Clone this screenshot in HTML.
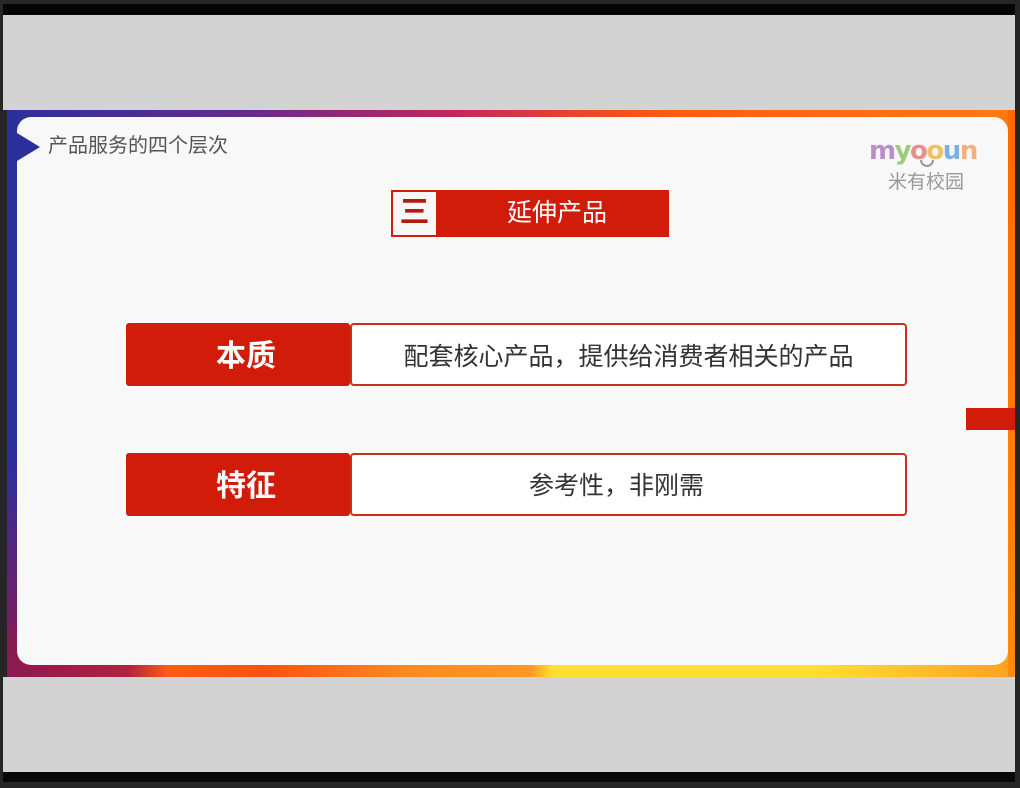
<!DOCTYPE html>
<html><head><meta charset="utf-8"><style>
*{margin:0;padding:0;box-sizing:border-box}
body{width:1020px;height:788px;background:#262626;position:relative;overflow:hidden;font-family:"Liberation Sans","Noto Sans CJK SC",sans-serif}
.abs{position:absolute}
.red{background:#d21c0a}
</style></head><body>
<div class="abs" style="left:3px;top:4px;width:1012px;height:11px;background:#050505"></div>
<div class="abs" style="left:3px;top:15px;width:1012px;height:95px;background:#d3d3d3"></div>
<div class="abs" style="left:3px;top:677px;width:1012px;height:95px;background:#d3d3d3"></div>
<div class="abs" style="left:3px;top:772px;width:1012px;height:10px;background:#080808"></div>
<!-- frame -->
<div class="abs" style="left:7px;top:110px;width:1008px;height:567px;background:linear-gradient(90deg,#2b2f9c 0%,#6a2a8a 25%,#c8265a 45%,#ff5a10 65%,#ff7a10 100%)"></div>
<div class="abs" style="left:7px;top:390px;width:1008px;height:287px;background:linear-gradient(90deg,#8a1a4e 0%,#b52040 12%,#ff5a15 16%,#ff5212 26%,#ff8a1a 40%,#ff9a20 52%,#ffdf30 54%,#ffe030 80%,#ffa020 100%)"></div>
<div class="abs" style="left:7px;top:110px;width:10px;height:540px;background:linear-gradient(180deg,#2b2f9c 0%,#2b2f9c 65%,#6a2070 90%,#8a1a4e 100%)"></div>
<div class="abs" style="left:1008px;top:110px;width:7px;height:567px;background:linear-gradient(180deg,#ff6a00,#ff8a10)"></div>
<!-- card -->
<div class="abs" style="left:17px;top:117px;width:991px;height:548px;background:#f8f8f8;border-radius:14px"></div>
<!-- arrow -->
<div class="abs" style="left:17px;top:133px;width:0;height:0;border-top:14px solid transparent;border-bottom:14px solid transparent;border-left:23px solid #2b2f9c"></div>
<div class="abs" style="left:48px;top:134px;font-size:20px;color:#555;line-height:24px">产品服务的四个层次</div>
<!-- logo -->
<div class="abs" style="left:869px;top:136px;font-size:26px;font-weight:bold;line-height:30px;letter-spacing:-1.5px;font-family:'DejaVu Sans',sans-serif"><span style="color:#b98fc9">m</span><span style="color:#9ccb7a">y</span><span style="color:#e8908a">o</span><span style="color:#f2c060">o</span><span style="color:#7fb0e0">u</span><span style="color:#f4b07a">n</span></div>
<div class="abs" style="left:920px;top:160px;width:14px;height:7px;border:2px solid #999;border-top:none;border-radius:0 0 8px 8px"></div>
<div class="abs" style="left:888px;top:172px;font-size:19px;color:#999;line-height:22px">米有校园</div>
<!-- header -->
<div class="abs red" style="left:391px;top:190px;width:278px;height:47px"></div>
<div class="abs" style="left:393px;top:192px;width:43px;height:43px;background:#f7f7f7;color:#b5190a;font-weight:bold;font-size:30px;line-height:42px;text-align:center">三</div>
<div class="abs" style="left:445px;top:190px;width:224px;height:47px;color:#fff;font-size:25px;line-height:47px;text-align:center">延伸产品</div>
<!-- row1 -->
<div class="abs red" style="left:126px;top:323px;width:224px;height:63px;border-radius:3px"></div>
<div class="abs" style="left:136px;top:323px;width:220px;height:63px;color:#fff;font-size:30px;font-weight:bold;line-height:68px;text-align:center">本质</div>
<div class="abs" style="left:350px;top:323px;width:557px;height:63px;border:2px solid #c8301e;border-radius:4px;background:#fff;font-size:25px;color:#333;line-height:64px;text-align:center">配套核心产品，提供给消费者相关的产品</div>
<!-- row2 -->
<div class="abs red" style="left:126px;top:453px;width:224px;height:63px;border-radius:3px"></div>
<div class="abs" style="left:136px;top:453px;width:220px;height:63px;color:#fff;font-size:30px;font-weight:bold;line-height:68px;text-align:center">特征</div>
<div class="abs" style="left:350px;top:453px;width:557px;height:63px;border:2px solid #c8301e;border-radius:4px;background:#fff;font-size:25px;color:#333;line-height:62px;text-align:center;padding-right:24px">参考性，非刚需</div>
<div class="abs red" style="left:966px;top:408px;width:49px;height:22px"></div>
</body></html>
